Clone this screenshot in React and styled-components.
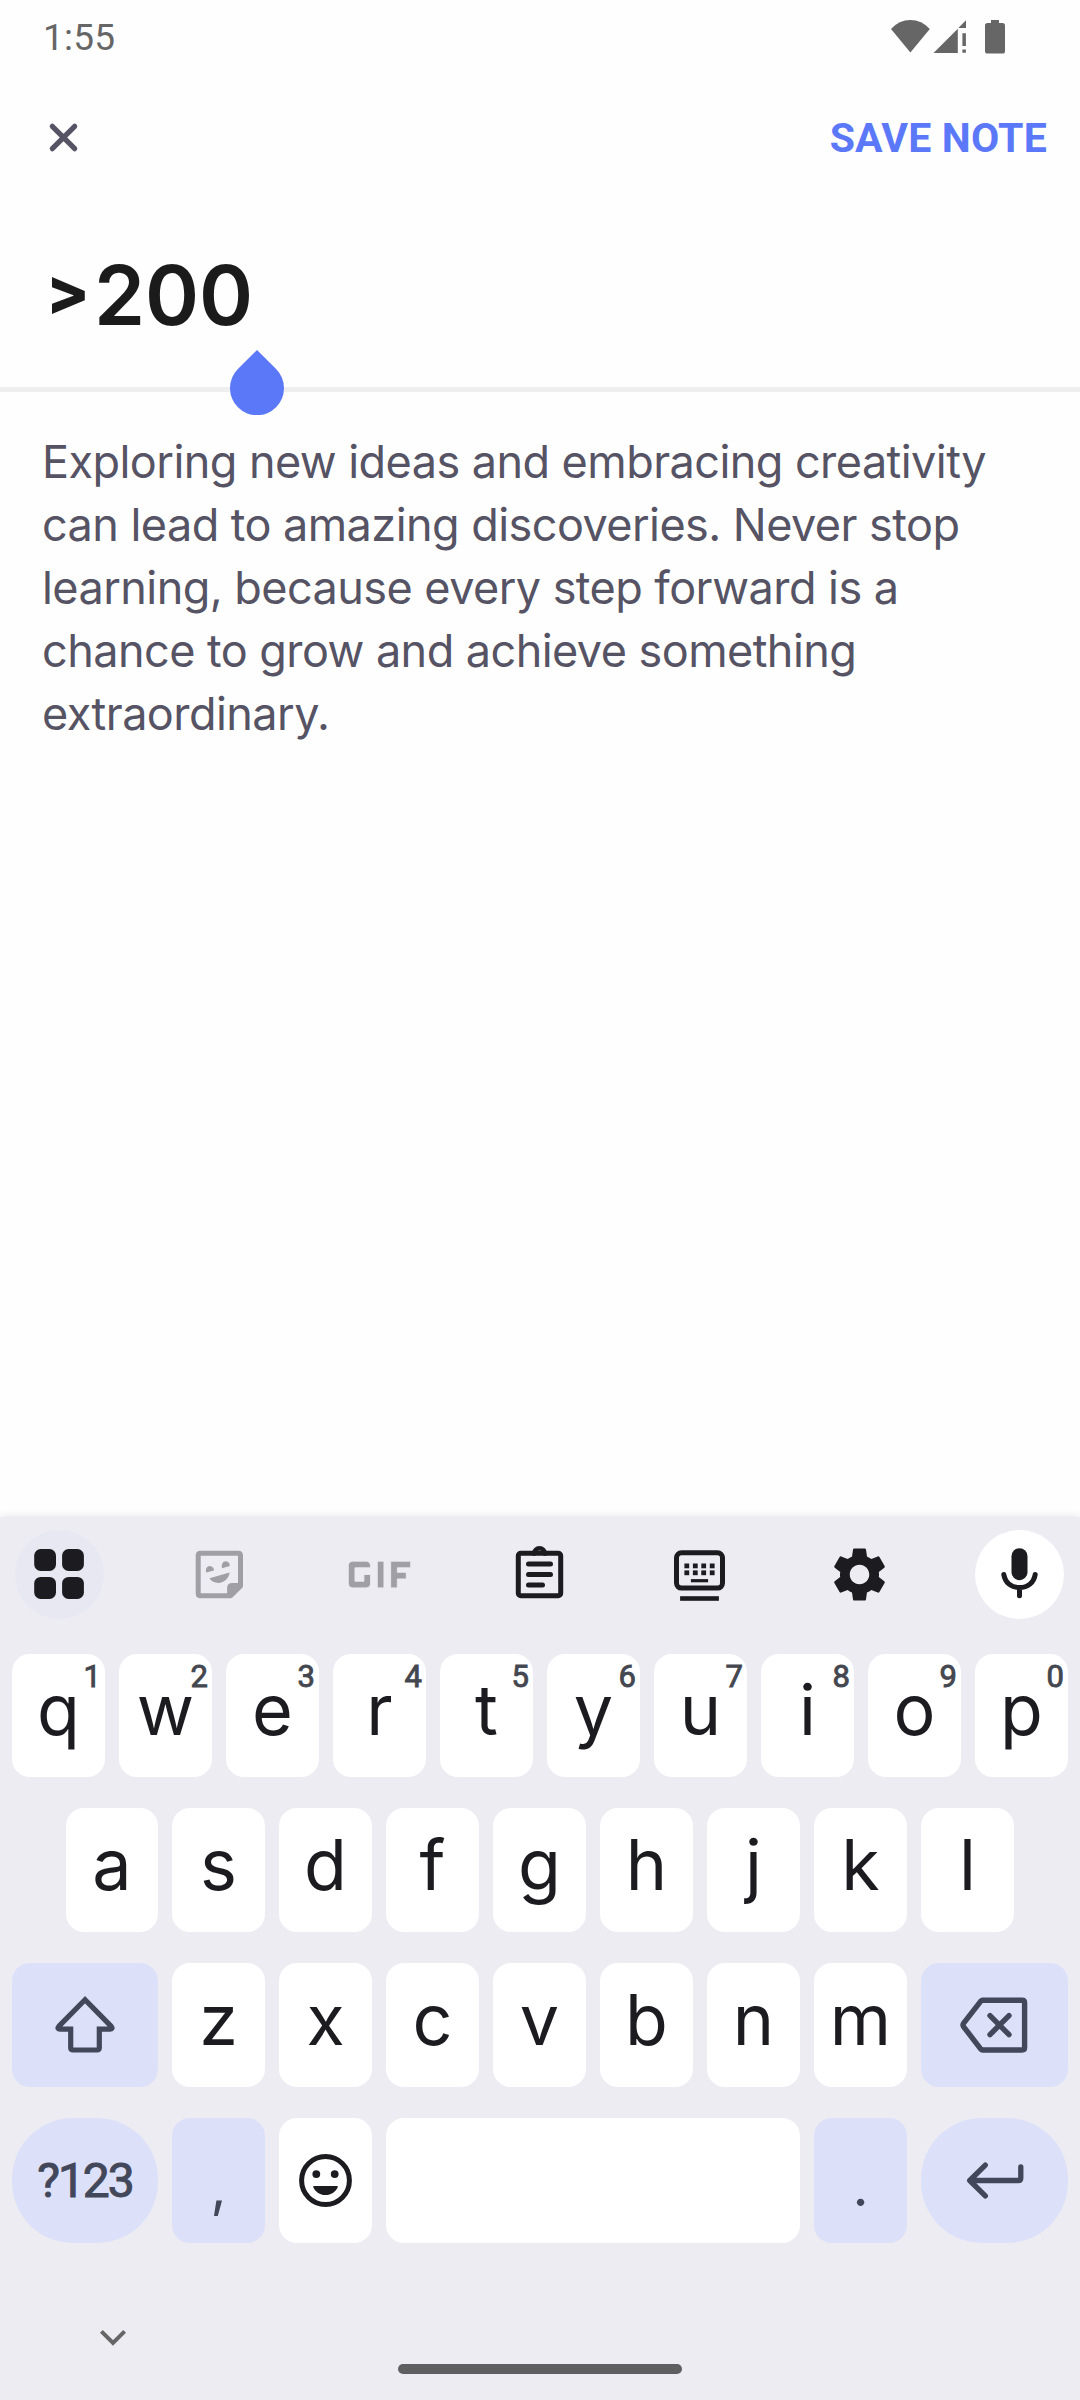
import React from 'react';
import styled, { createGlobalStyle } from 'styled-components';
import { MdGif, MdSettings } from 'react-icons/md';

const GlobalStyle = createGlobalStyle`
  * { box-sizing: border-box; }
  html, body { margin: 0; padding: 0; background: #fefefe; }
`;

const Screen = styled.div`
  width: 1080px;
  height: 2400px;
  display: flex;
  flex-direction: column;
  overflow: hidden;
  background: #fefefe;
  font-family: Inter, 'Liberation Sans', sans-serif;
`;

const StatusBar = styled.header`
  height: 74px;
  padding: 0 75px 0 43px;
  display: flex;
  align-items: center;
  justify-content: space-between;
  color: #666;
`;

const Clock = styled.span`
  padding-top: 2px;
  font: 400 37px/44px Roboto, sans-serif;
  letter-spacing: 0.2px;
`;

const StatusIcons = styled.div`
  display: flex;
  align-items: center;
  fill: #666;
`;

const TopBar = styled.nav`
  height: 127px;
  padding: 0 33px 0 47px;
  display: flex;
  align-items: center;
  justify-content: space-between;
`;

const IconButton = styled.button`
  display: flex;
  padding: 0;
  border: 0;
  background: none;
`;

const SaveButton = styled.button`
  padding: 0;
  border: 0;
  background: none;
  color: #5b78f9;
  font: 700 41px/50px Roboto, sans-serif;
  letter-spacing: 0.2px;
`;

const TitleField = styled.div`
  position: relative;
  height: 191px;
  padding: 45px 46px 0;
  border-bottom: 5px solid #eee;
  display: flex;
  align-items: flex-start;
`;

const Title = styled.h1`
  margin: 0;
  display: flex;
  gap: 4px;
  color: #1b1b1b;
  font-size: 82px;
  line-height: 100px;
  font-weight: 600;
`;

const Angle = styled.span`
  font-size: 64px;
  line-height: 90px;
  font-weight: 800;
`;

const CursorHandle = styled.svg`
  position: absolute;
  left: 230px;
  top: 149px;
  z-index: 1;
`;

const NoteBody = styled.p`
  flex: 1;
  margin: 0;
  padding: 38px 42px 0;
  color: #555364;
  font-size: 45px;
  line-height: 63px;
  letter-spacing: -0.55px;
  white-space: pre-line;
`;

const Keyboard = styled.section`
  height: 883px;
  background: #edecf3;
  box-shadow: 0 0 8px rgba(0, 0, 0, 0.12);
  display: flex;
  flex-direction: column;
`;

const Toolbar = styled.div`
  height: 137px;
  padding: 13px 16px 0 15px;
  display: flex;
  justify-content: space-between;
`;

const Tool = styled.button`
  width: 89px;
  height: 89px;
  padding: 0;
  border: 0;
  border-radius: 50%;
  display: flex;
  align-items: center;
  justify-content: center;
  background: ${(p) => p.$bg || 'transparent'};
  color: ${(p) => (p.$muted ? '#a09fa6' : '#1b1b20')};
  svg { flex: none; }
`;

const ThinGif = styled(MdGif)`
  stroke: #edecf3;
  stroke-width: 0.2px;
`;

const Rows = styled.div`
  padding: 0 12px;
  display: flex;
  flex-direction: column;
  gap: 31px;
`;

const Row = styled.div`
  height: ${(p) => p.$height || 124}px;
  padding-left: ${(p) => p.$inset || 0}px;
  display: flex;
  gap: 14px;
`;

const Key = styled.button`
  position: relative;
  flex: ${(p) => p.$grow || 0} 0 ${(p) => p.$width || 93}px;
  padding: 0;
  border: 0;
  border-radius: ${(p) => (p.$pill ? 61 : 18)}px;
  display: flex;
  align-items: center;
  justify-content: center;
  background: ${(p) => (p.$tonal ? '#dce1f9' : '#fff')};
  color: ${(p) => (p.$tonal ? '#43475a' : '#1b1b20')};
`;

const Letter = styled.span`
  padding-bottom: 11px;
  font: 400 70px/90px Inter, sans-serif;
`;

const Hint = styled.sup`
  position: absolute;
  top: 6px;
  right: 4px;
  color: #44474f;
  font: 400 31px/34px Roboto, sans-serif;
  -webkit-text-stroke: 0.9px #44474f;
`;

const ModeLabel = styled.span`
  font: 400 48px/60px Roboto, sans-serif;
  letter-spacing: -2px;
  -webkit-text-stroke: 1px #43475a;
`;

const Punctuation = styled.span`
  padding-top: 10px;
  font: 400 56px/70px Inter, sans-serif;
`;

const NavBar = styled.footer`
  flex: 1;
  padding: 81px 0 0 93px;
  display: flex;
  align-items: flex-start;
`;

const HomePill = styled.div`
  width: 284px;
  height: 10px;
  margin: 40px 0 0 265px;
  border-radius: 5px;
  background: #5f5f61;
`;

const Glyph = ({ size = 65, weight = 5, children }) => (
  <svg
    width={size}
    height={size}
    viewBox={`${-size / 2} ${-size / 2} ${size} ${size}`}
    fill="none"
    stroke="currentColor"
    strokeWidth={weight}
    strokeLinecap="round"
    strokeLinejoin="round"
  >
    {children}
  </svg>
);

const GridIcon = () => (
  <Glyph>
    <g fill="currentColor" stroke="none">
      <rect x="-25.3" y="-25.5" width="21.8" height="22" rx="6.5" />
      <rect x="2.6" y="-25.5" width="21.8" height="22" rx="6.5" />
      <rect x="-25.3" y="2.4" width="21.8" height="22" rx="6.5" />
      <rect x="2.6" y="2.4" width="21.8" height="22" rx="6.5" />
    </g>
  </Glyph>
);

const StickerIcon = () => (
  <Glyph>
    <path d="M-19 -21.2H18.7Q21 -21.2 21 -18.9V11.4L11.2 21.2H-19Q-21.3 21.2 -21.3 18.9V-18.9Q-21.3 -21.2 -19 -21.2Z" />
    <g fill="currentColor" stroke="none">
      <path d="M7.6 21V13.5Q7.6 8.4 13 8.4H21V12L12 21Z" />
      <path d="M-13.2 -1.9C-14.6 -5.4 -12.4 -8.6 -9.6 -8.5C-7 -8.4 -5.4 -6.3 -5.5 -4Z" />
      <path d="M2.6 -6.3C1.4 -10 3.5 -13.4 6.3 -13.3C9 -13.2 10.4 -11 10.3 -8.4Z" />
      <path d="M-10 3.8L10 -2C9.5 4 4 8.4 -1 8.4C-5 8.4 -8.3 6.8 -10 3.8Z" />
    </g>
  </Glyph>
);

const ClipboardIcon = () => (
  <Glyph>
    <rect x="-21.2" y="-21.2" width="42.4" height="42.4" rx="2.5" />
    <path d="M-11 -10.4H11M-11 0H11M-11 10.6H3" />
    <path strokeWidth="4.4" d="M-5.4 -20.8A5.4 5.4 0 0 1 5.4 -20.8" />
  </Glyph>
);

const KeyboardIcon = () => (
  <Glyph>
    <rect x="-23" y="-21.8" width="46" height="35.4" rx="5" />
    <g fill="currentColor" stroke="none">
      {[-12.7, -4.2, 4.2, 12.7].map((x) => (
        <React.Fragment key={x}>
          <rect x={x - 2.4} y="-11" width="4.8" height="4.8" />
          <rect x={x - 2.4} y="-4.1" width="4.8" height="4.8" />
        </React.Fragment>
      ))}
      <rect x="-8.6" y="4.6" width="17.2" height="3.2" />
      <rect x="-19.4" y="21.7" width="38.8" height="4.6" />
    </g>
  </Glyph>
);

const MicIcon = () => (
  <Glyph>
    <rect x="-8" y="-26.3" width="16" height="32" rx="8" fill="currentColor" stroke="none" />
    <path d="M-15.7 0C-14.4 8.2 -8.2 13.1 0 13.1S14.4 8.2 15.7 0M0 13.5V21.2" />
  </Glyph>
);

const ShiftIcon = () => (
  <Glyph size={72} weight={5.2}>
    <path
      strokeLinejoin="miter"
      d="M0 -25.2L-26.2 1.4C-27.8 3.2 -26.8 4.2 -25 4.2H-14.3V22.8Q-14.3 25 -12 25H12Q14.3 25 14.3 22.8V4.2H25C26.8 4.2 27.8 3.2 26.2 1.4Z"
    />
  </Glyph>
);

const BackspaceIcon = () => (
  <Glyph size={76} weight={5.4}>
    <path d="M-12.6 -24.8H27Q29.6 -24.8 29.6 -22.3V22.5Q29.6 25 27 25H-12.6Q-13.4 25 -14 24.3L-31.5 1.6Q-32.5 0 -31.5 -1.6L-14 -24.1Q-13.4 -24.8 -12.6 -24.8Z" />
    <path d="M-5 -9.4L14 9.6M14 -9.4L-5 9.6" />
  </Glyph>
);

const EmojiIcon = () => (
  <Glyph>
    <circle r="23.9" />
    <g fill="currentColor" stroke="none">
      <circle cx="-9.2" cy="-6.4" r="3.9" />
      <circle cx="9.2" cy="-6.4" r="3.9" />
      <path d="M-11.5 5.6H11.5Q12.8 5.6 12.2 6.8C10 11.6 5.6 14.6 0 14.6S-10 11.6 -12.2 6.8Q-12.8 5.6 -11.5 5.6Z" />
    </g>
  </Glyph>
);

const EnterIcon = () => (
  <Glyph weight={5.3}>
    <path d="M26.3 -13.6V-2.6Q26.3 0 23.7 0H-24.6M-9.2 -15.4L-24.8 0L-9.2 15.4" />
  </Glyph>
);

const TOP = 'qwertyuiop'.split('');
const MIDDLE = 'asdfghjkl'.split('');
const BOTTOM = 'zxcvbnm'.split('');

const LetterKey = ({ char, hint, width }) => (
  <Key $width={width}>
    <Letter>{char}</Letter>
    {hint && <Hint>{hint}</Hint>}
  </Key>
);

export default function App() {
  return (
    <Screen>
      <GlobalStyle />
      <StatusBar>
        <Clock>1:55</Clock>
        <StatusIcons>
          <svg width="114" height="36" viewBox="891 19 114 36">
            <path d="M910.4 52.5L891 29Q899 20 910.4 20T929.8 29Z" />
            <path d="M933.5 53H957.8V28.8ZM958.3 28L966 20.3V28Z" />
            <path d="M962.4 33.2H965.9V46H962.4ZM962.4 49.6H965.9V52.8H962.4Z" />
            <path d="M991 20H999V23H1002.5Q1005 23 1005 25.5V51Q1005 53.6 1002.5 53.6H987.5Q985 53.6 985 51V25.5Q985 23 987.5 23H991Z" />
          </svg>
        </StatusIcons>
      </StatusBar>
      <TopBar>
        <IconButton aria-label="Close">
          <svg width="33" height="33" viewBox="-16.5 -16.5 33 33" stroke="#555364" strokeWidth="5.2" strokeLinecap="round">
            <path d="M-11.2 -11.2L11.2 11.2M11.2 -11.2L-11.2 11.2" />
          </svg>
        </IconButton>
        <SaveButton>SAVE NOTE</SaveButton>
      </TopBar>
      <TitleField>
        <Title>
          <Angle>&gt;</Angle>200
        </Title>
        <CursorHandle width="54" height="65" viewBox="0 0 54 65">
          <path fill="#5b78f9" d="M27 0L46.1 19.1A27 27 0 1 1 7.9 19.1Z" />
        </CursorHandle>
      </TitleField>
      <NoteBody>
        {`Exploring new ideas and embracing creativity
can lead to amazing discoveries. Never stop
learning, because every step forward is a
chance to grow and achieve something
extraordinary.`}
      </NoteBody>
      <Keyboard>
        <Toolbar>
          <Tool $bg="#e8e8f3"><GridIcon /></Tool>
          <Tool $muted><StickerIcon /></Tool>
          <Tool $muted><ThinGif size={107} /></Tool>
          <Tool><ClipboardIcon /></Tool>
          <Tool><KeyboardIcon /></Tool>
          <Tool><MdSettings size={65} /></Tool>
          <Tool $bg="#fff"><MicIcon /></Tool>
        </Toolbar>
        <Rows>
          <Row $height={123}>
            {TOP.map((c, i) => (
              <LetterKey key={c} char={c} hint={String((i + 1) % 10)} />
            ))}
          </Row>
          <Row $inset={54}>
            {MIDDLE.map((c, i) => <LetterKey key={c} char={c} width={i ? 93 : 92} />)}
          </Row>
          <Row>
            <Key $tonal $width={146}><ShiftIcon /></Key>
            {BOTTOM.map((c) => <LetterKey key={c} char={c} />)}
            <Key $tonal $width={147}><BackspaceIcon /></Key>
          </Row>
          <Row $height={125}>
            <Key $tonal $pill $width={146}><ModeLabel>?123</ModeLabel></Key>
            <Key $tonal><Punctuation>,</Punctuation></Key>
            <Key><EmojiIcon /></Key>
            <Key $grow={1} $width={300} aria-label="Space" />
            <Key $tonal><Punctuation>.</Punctuation></Key>
            <Key $tonal $pill $width={147}><EnterIcon /></Key>
          </Row>
        </Rows>
        <NavBar>
          <svg width="40" height="28" viewBox="0 0 40 28" fill="none" stroke="#666" strokeWidth="4">
            <path d="M8.4 7.4L20 19L31.6 7.4" />
          </svg>
          <HomePill />
        </NavBar>
      </Keyboard>
    </Screen>
  );
}
